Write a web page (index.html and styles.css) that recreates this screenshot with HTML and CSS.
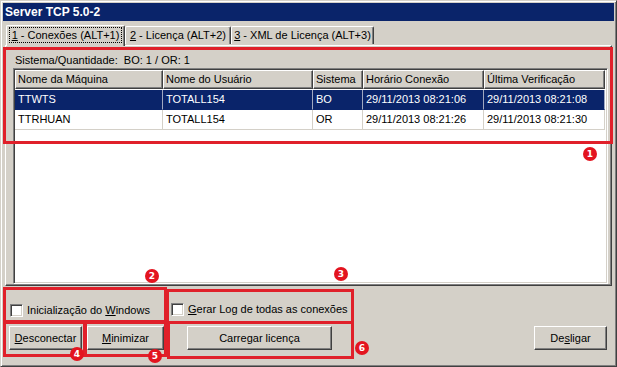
FILE: index.html
```html
<!DOCTYPE html>
<html lang="pt">
<head>
<meta charset="utf-8">
<title>Server TCP 5.0-2</title>
<link rel="stylesheet" href="styles.css">
</head>
<body>
<div class="window">
  <div class="titlebar">Server TCP 5.0-2</div>
  <div class="client">
    <div class="tabs">
      <div class="tab tab-1 active"><span class="focus"><u>1</u> - Conexões (ALT+1)</span></div>
      <div class="tab tab-2"><u>2</u> - Licença (ALT+2)</div>
      <div class="tab tab-3"><u>3</u> - XML de Licença (ALT+3)</div>
    </div>
    <div class="panel">
      <div class="summary">Sistema/Quantidade:&nbsp; BO: 1 / OR: 1</div>
      <div class="listview">
        <div class="lv-row lv-header">
          <div class="hcell">Nome da Máquina</div>
          <div class="hcell">Nome do Usuário</div>
          <div class="hcell">Sistema</div>
          <div class="hcell">Horário Conexão</div>
          <div class="hcell">Última Verificação</div>
        </div>
        <div class="lv-row selected">
          <div class="cell">TTWTS</div>
          <div class="cell">TOTALL154</div>
          <div class="cell">BO</div>
          <div class="cell">29/11/2013 08:21:06</div>
          <div class="cell">29/11/2013 08:21:08</div>
        </div>
        <div class="lv-row">
          <div class="cell">TTRHUAN</div>
          <div class="cell">TOTALL154</div>
          <div class="cell">OR</div>
          <div class="cell">29/11/2013 08:21:26</div>
          <div class="cell">29/11/2013 08:21:30</div>
        </div>
      </div>
    </div>
    <div class="options">
      <label class="option option-startup"><span class="checkbox"></span><span>Inicialização do <u>W</u>indows</span></label>
      <label class="option option-log"><span class="checkbox"></span><span><u>G</u>erar Log de todas as conexões</span></label>
    </div>
    <div class="actions">
      <button class="btn btn-disconnect"><u>D</u>esconectar</button>
      <button class="btn btn-minimize"><u>M</u>inimizar</button>
      <button class="btn btn-license">Carregar licença</button>
      <button class="btn btn-shutdown">De<u>s</u>ligar</button>
    </div>
  </div>

  <div class="mark mark-1"></div>
  <div class="mark mark-2"></div>
  <div class="mark mark-3"></div>
  <div class="mark mark-4"></div>
  <div class="mark mark-5"></div>
  <div class="mark mark-6"></div>
  <div class="badge badge-1">1</div>
  <div class="badge badge-2">2</div>
  <div class="badge badge-3">3</div>
  <div class="badge badge-4">4</div>
  <div class="badge badge-5">5</div>
  <div class="badge badge-6">6</div>
</div>
</body>
</html>
```
FILE: styles.css
```css
* { box-sizing: border-box; }
html, body { margin: 0; padding: 0; background: #d4d0c8; }
body {
  font-family: "Liberation Sans", Arial, sans-serif;
  font-size: 11px;
  color: #000;
}
u { text-decoration: underline; text-underline-offset: 1px; }

.window {
  position: relative;
  width: 617px;
  height: 367px;
  background: #d4d0c8;
  border: 1px solid;
  border-color: #d4d0c8 #404040 #404040 #d4d0c8;
  box-shadow: inset 1px 1px #ffffff, inset -1px -1px #808080;
  padding: 2px;
  display: flex;
  flex-direction: column;
}

.titlebar {
  height: 18px;
  background: #0a246a;
  color: #fff;
  font-weight: bold;
  font-size: 12px;
  line-height: 18px;
  padding-left: 2px;
}

.client {
  flex: 1;
  display: flex;
  flex-direction: column;
}

/* Tabs */
.tabs {
  height: 24px;
  display: flex;
  align-items: flex-end;
  padding-left: 3px;
  position: relative;
  z-index: 2;
}
.tab {
  height: 18px;
  margin-bottom: 1px;
  border-top: 1px solid #fff;
  border-left: 1px solid #fff;
  border-right: 1px solid #404040;
  box-shadow: inset -1px 0 #808080;
  border-radius: 2px 2px 0 0;
  text-align: center;
  line-height: 16px;
  white-space: nowrap;
}
.tab-1 { width: 119px; }
.tab-2 { width: 106px; }
.tab-3 { width: 143px; }
.tab.active {
  height: 21px;
  margin-bottom: -1px;
  background: #d4d0c8;
  line-height: 19px;
}
.focus {
  display: inline-block;
  outline: 1px dotted #000;
  outline-offset: 0;
  padding: 0 2px;
  line-height: 14px;
}

/* Tab page */
.panel {
  height: 241px;
  margin: 0 2px;
  border: 1px solid;
  border-color: #fff #404040 #404040 #fff;
  box-shadow: inset -1px -1px #808080;
  padding: 0 3px 1px 7px;
  display: flex;
  flex-direction: column;
}
.summary {
  margin-top: 8px;
  margin-left: 2px;
  line-height: 13px;
  height: 13px;
  margin-bottom: 1px;
}
.listview {
  flex: 1;
  background: #fff;
  border: 1px solid;
  border-color: #808080 #fff #fff #808080;
  box-shadow: inset 1px 1px #404040, inset -1px -1px #d4d0c8;
  padding: 1px;
}
.lv-row {
  display: grid;
  grid-template-columns: 148px 150px 50px 121px 121px;
  height: 20px;
}
.lv-header { height: 19px; margin-bottom: 1px; }
.hcell {
  background: #d4d0c8;
  border-top: 1px solid #fff;
  border-left: 1px solid #fff;
  border-right: 1px solid #404040;
  border-bottom: 1px solid #404040;
  box-shadow: inset -1px -1px #808080;
  padding-left: 2px;
  line-height: 16px;
  white-space: nowrap;
  overflow: hidden;
}
.cell {
  padding-left: 3px;
  line-height: 19px;
  border-right: 1px solid #d4d0c8;
  border-bottom: 1px solid #d4d0c8;
  white-space: nowrap;
  overflow: hidden;
}
.lv-row.selected .cell {
  background: #0a246a;
  color: #fff;
  border-bottom-color: #0a246a;
  border-right-color: #a0a8c0;
}

/* Options */
.options {
  display: flex;
  align-items: center;
  padding-left: 7px;
  margin-top: 18px;
  height: 13px;
}
.option {
  display: flex;
  align-items: center;
  gap: 4px;
  line-height: 13px;
  white-space: nowrap;
}
.option-startup { width: 161px; }
.option-log { position: relative; top: -1px; }
.checkbox {
  width: 13px;
  height: 13px;
  background: #fff;
  border: 1px solid;
  border-color: #808080 #fff #fff #808080;
  box-shadow: inset 1px 1px #404040, inset -1px -1px #d4d0c8;
  flex: none;
}

/* Buttons */
.actions {
  display: flex;
  margin-top: 9px;
  padding-left: 6px;
  padding-right: 7px;
}
.btn {
  height: 24px;
  background: #d4d0c8;
  font-family: inherit;
  font-size: 11px;
  color: #000;
  border: 1px solid;
  border-color: #fff #404040 #404040 #fff;
  box-shadow: inset -1px -1px #808080;
  border-radius: 0;
  padding: 0;
  margin: 0;
  text-align: center;
}
.btn-disconnect { width: 73px; }
.btn-minimize { width: 77px; margin-left: 5px; }
.btn-license { width: 145px; margin-left: 23px; }
.btn-shutdown { width: 73px; margin-left: auto; }

/* Annotations drawn over the screenshot */
.mark {
  position: absolute;
  border: 3px solid #e0202a;
  pointer-events: none;
  z-index: 5;
}
.mark-1 { left: 2px; top: 46px; width: 610px; height: 97px; }
.mark-2 { left: 2px; top: 286px; width: 164px; height: 37px; }
.mark-3 { left: 165px; top: 288px; width: 188px; height: 35px; }
.mark-4 { left: 2px; top: 319px; width: 83px; height: 37px; }
.mark-5 { left: 83px; top: 319px; width: 83px; height: 37px; }
.mark-6 { left: 166px; top: 320px; width: 187px; height: 38px; }

.badge {
  position: absolute;
  width: 14px;
  height: 14px;
  border-radius: 50%;
  background: #e3141f;
  color: #fff;
  font-family: "DejaVu Sans", sans-serif;
  font-weight: bold;
  font-size: 9px;
  line-height: 14px;
  text-align: center;
  z-index: 6;
}
.badge-1 { left: 582px; top: 146px; }
.badge-2 { left: 144px; top: 268px; }
.badge-3 { left: 333px; top: 266px; }
.badge-4 { left: 69px; top: 346px; }
.badge-5 { left: 147px; top: 348px; }
.badge-6 { left: 354px; top: 340px; }
```
